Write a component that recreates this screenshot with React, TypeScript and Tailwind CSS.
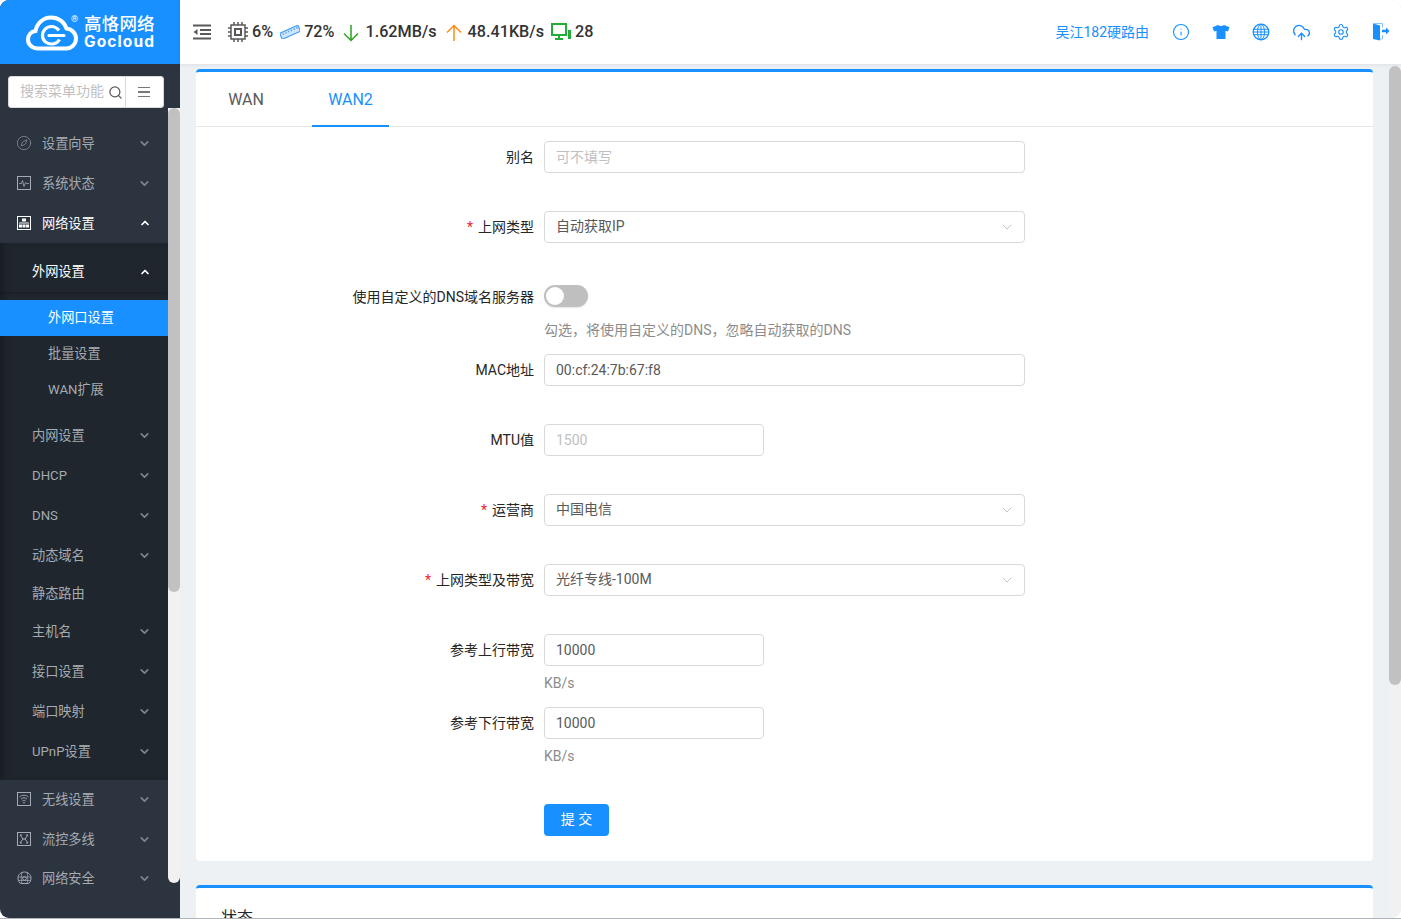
import React from 'react';
import { ChevronDown, ChevronUp, CloudUpload, Compass, Info, Search, Settings } from 'lucide-react';

const fontStack = "font-[Roboto,'Noto_Sans_CJK_SC',sans-serif]";

function Logo() {
  return (
    <div className="relative flex h-16 items-center bg-[#1890ff] pl-[26px]">
      <svg width="52" height="36" viewBox="0 0 52 36" fill="none" className="mt-[1px]">
        <path
          d="M12 33.500C5.500 33.500 2 29 2 24.500C2 20 5 16.500 9.500 16C11 8 17.500 2.500 25 2.500C32.500 2.500 38.500 7 40.500 13.500C46 14 50 18.500 50 23.500C50 29 45.500 33.500 40 33.500Z"
          stroke="#fff"
          strokeWidth="4"
        />
        <path d="M33 15.500C31 13 28.500 11.500 25.500 11.500C20.500 11.500 16.500 15.500 16.500 20.500C16.500 25.500 20.500 29 25.500 29C29 29 32 27 33.500 24.500" stroke="#fff" strokeWidth="3.200" />
        <path d="M23 20.500H38" stroke="#fff" strokeWidth="3.200" strokeLinecap="round" />
      </svg>
      <span className="absolute left-[71px] top-[15px] text-[9px] leading-none text-white">®</span>
      <div className="ml-[6px] flex flex-col text-white">
        <span className="text-[17.500px] leading-[19px] font-medium tracking-[0.200px]">高恪网络</span>
        <span className="font-[Inter,sans-serif] text-[15.500px] leading-[15px] font-bold tracking-[1.100px]">Gocloud</span>
      </div>
    </div>
  );
}

function BoxIcon({ children }: { children: React.ReactNode }) {
  return (
    <svg width="14" height="14" viewBox="0 0 14 14" fill="none" stroke="currentColor" className="shrink-0">
      <rect x="0.500" y="0.500" width="13" height="13" />
      {children}
    </svg>
  );
}

function TopItem({
  label,
  icon,
  open,
  className = '',
}: {
  label: string;
  icon: React.ReactNode;
  open?: boolean;
  className?: string;
}) {
  return (
    <div className={`flex h-10 items-center pl-[17px] pr-[17px] ${open ? 'text-white' : 'text-[#a4abb2]'} ${className}`}>
      <span className="flex w-[25px] shrink-0">{icon}</span>
      <span className="flex-1 pt-[2px] text-[13.200px]">{label}</span>
      {open ? <ChevronUp size={12} strokeWidth={3.500} /> : <ChevronDown size={13} strokeWidth={3} className="text-[#7f868d]" />}
    </div>
  );
}

function SubItem({ label, arrow = true, h = 'h-10' }: { label: string; arrow?: boolean; h?: string }) {
  return (
    <div className={`flex ${h} items-center pl-8 pr-[17px] text-[#a4abb2]`}>
      <span className="flex-1 pt-[2px] text-[13.200px]">{label}</span>
      {arrow && <ChevronDown size={13} strokeWidth={3} className="text-[#7f868d]" />}
    </div>
  );
}

function Sidebar() {
  return (
    <aside className="flex w-[180px] shrink-0 flex-col bg-[#2c3440]">
      <Logo />
      <div className="flex min-h-0 flex-1">
        <div className="w-[168px] shrink-0 overflow-hidden">
          <div className="mb-[15px] ml-2 mr-1 mt-3 flex h-8 items-center rounded-[3px] border border-[#d9d9d9] bg-white">
            <span className="w-[99px] shrink-0 overflow-hidden whitespace-nowrap pb-[2px] pl-[11px] text-sm leading-none text-[#bfbfbf]">搜索菜单功能</span>
            <Search size={15} className="shrink-0 text-[#595959]" />
            <span className="ml-[2px] h-full w-px bg-[#d9d9d9]" />
            <span className="ml-3 flex w-3 flex-col gap-[3px]">
              <i className="h-[1.500px] bg-[#777]" />
              <i className="h-[1.500px] bg-[#777]" />
              <i className="h-[1.500px] bg-[#777]" />
            </span>
          </div>
          <TopItem label="设置向导" icon={<Compass size={16} strokeWidth={1.100} className="-ml-px text-[#8f969d]" />} />
          <TopItem
            label="系统状态"
            icon={
              <BoxIcon>
                <path d="M2 7.500h2.500l1-3 1.500 6 1.500-4 1 1H12" strokeWidth="0.800" />
              </BoxIcon>
            }
          />
          <TopItem
            label="网络设置"
            open
            icon={
              <svg width="14" height="14" viewBox="0 0 14 14" className="shrink-0">
                <rect width="14" height="14" fill="#fff" />
                <rect x="1" y="1" width="12" height="12" fill="#2c3440" />
                <rect x="5" y="2.500" width="4" height="3" fill="#fff" />
                <rect x="2" y="6.500" width="10" height="1" fill="#fff" />
                <rect x="2" y="8.500" width="3" height="3" fill="#fff" />
                <rect x="5.500" y="8.500" width="3" height="3" fill="#fff" />
                <rect x="9" y="8.500" width="3" height="3" fill="#fff" />
              </svg>
            }
          />
          <div className="h-[537px] bg-[#1f262d] shadow-[inset_8px_0_10px_-6px_rgba(0,0,0,0.300)]">
            <div className="flex h-[49px] items-center pl-8 pr-[17px] text-white shadow-[0_1px_3px_rgba(0,0,0,0.250)]">
              <span className="flex-1 pt-[8px] text-[13.200px]">外网设置</span>
              <ChevronUp size={12} strokeWidth={3.500} className="mt-[8px]" />
            </div>
            <div className="pb-[7px] pt-2">
              <div className="flex h-9 items-center bg-[#1890ff] pl-12 text-[13.200px] text-white">外网口设置</div>
              <div className="flex h-9 items-center pl-12 text-[13.200px] text-[#a4abb2]">批量设置</div>
              <div className="flex h-9 items-center pl-12 text-[13.200px] text-[#a4abb2]">WAN扩展</div>
            </div>
            <SubItem label="内网设置" />
            <SubItem label="DHCP" />
            <SubItem label="DNS" />
            <SubItem label="动态域名" />
            <SubItem label="静态路由" arrow={false} h="h-9" />
            <SubItem label="主机名" />
            <SubItem label="接口设置" />
            <SubItem label="端口映射" />
            <SubItem label="UPnP设置" />
          </div>
          <TopItem
            label="无线设置"
            className="-mt-px"
            icon={
              <BoxIcon>
                <path d="M2.500 5c2.800-2.300 6.200-2.300 9 0M4 7c2-1.500 4-1.500 6 0M5.500 9c1-.8 2-.8 3 0" strokeWidth="0.900" />
                <circle cx="7" cy="10.800" r="0.800" fill="currentColor" stroke="none" />
              </BoxIcon>
            }
          />
          <TopItem
            label="流控多线"
            icon={
              <BoxIcon>
                <path d="M3 3l3 4-3 4M11 3L8 7l3 4M3 3h2M9 3h2M3 11h2M9 11h2M5.500 7h3" strokeWidth="1" />
              </BoxIcon>
            }
          />
          <TopItem
            label="网络安全"
            className="-mt-px"
            icon={
              <svg width="15" height="14" viewBox="0 0 15 14" fill="none" stroke="currentColor" strokeWidth="1" className="shrink-0">
                <path d="M1 7c0-3.500 3-6 6.500-6S14 3.500 14 7c0 3-1.500 5.500-3 5.500H4C2.500 12.500 1 10 1 7z" />
                <path d="M5 1.500C4 4 4 10 5 12.500M10 1.500c1 2.500 1 8.500 0 11M1 6h13M1.500 9.500h12" strokeWidth="0.700" />
                <circle cx="7.500" cy="7.500" r="1.800" />
              </svg>
            }
          />
        </div>
        <div className="mt-11 flex h-[775px] w-3 flex-col overflow-hidden rounded-b-md bg-[#f1f1f1]">
          <div className="h-[484px] rounded-md bg-[#c1c1c1]" />
        </div>
      </div>
    </aside>
  );
}

function Stat({ children, className = '' }: { children: React.ReactNode; className?: string }) {
  return <span className={`text-[16.200px] font-medium text-[#333] ${className}`}>{children}</span>;
}

function CpuIcon() {
  return (
    <svg width="20" height="20" viewBox="0 0 20 20" fill="none" stroke="#595959" className="ml-[17px]">
      <rect x="3" y="3" width="14" height="14" strokeWidth="1.500" />
      <rect x="7" y="7" width="6" height="6" strokeWidth="2" />
      <path d="M6 0v3M10 0v3M14 0v3M6 17v3M10 17v3M14 17v3M0 6h3M0 10h3M0 14h3M17 6h3M17 10h3M17 14h3" strokeWidth="1.500" />
    </svg>
  );
}

function MemoryIcon() {
  return (
    <svg width="20" height="14" viewBox="0 0 20 14" className="ml-[7px]">
      <g transform="rotate(-24 10 7)">
        <rect x="0" y="4" width="20" height="6.500" rx="0.800" fill="#cfe6fd" stroke="#3f9bf6" strokeWidth="1.200" />
        <path d="M3 5v2M6 5v2M9 5v2M12 5v2M15 5v2M18 5v2" stroke="#3f9bf6" strokeWidth="1" />
      </g>
    </svg>
  );
}

function ArrowDownIcon() {
  return (
    <svg width="16" height="18" viewBox="0 0 16 18" fill="none" stroke="#2ea121" strokeWidth="1.500" className="ml-[9px] mt-[1px]">
      <path d="M8 1v15.500M1 9.500l7 7 7-7" />
    </svg>
  );
}

function ArrowUpIcon() {
  return (
    <svg width="16" height="18" viewBox="0 0 16 18" fill="none" stroke="#fa8c16" strokeWidth="1.500" className="ml-[9px] mt-[1px]">
      <path d="M8 17V1.500M1 8.500l7-7 7 7" />
    </svg>
  );
}

function MonitorIcon() {
  return (
    <svg width="20" height="18" viewBox="0 0 20 18" fill="none" className="ml-[7px]">
      <rect x="1" y="1" width="14" height="11" stroke="#22ac38" strokeWidth="2" />
      <path d="M8 12v3M4 16h8" stroke="#22ac38" strokeWidth="2" />
      <rect x="17" y="7" width="3" height="9" fill="#22ac38" />
    </svg>
  );
}

function GlobeIcon() {
  return (
    <svg width="18" height="18" viewBox="0 0 18 18" fill="none" stroke="#1890ff">
      <circle cx="9" cy="9" r="7.800" strokeWidth="1.300" />
      <ellipse cx="9" cy="9" rx="3.500" ry="7.800" strokeWidth="1" />
      <path d="M9 1v16M1.500 6.300h15M1.500 11.700h15M1 9h16" strokeWidth="1" />
    </svg>
  );
}

function ShirtIcon() {
  return (
    <svg width="18" height="16" viewBox="0 0 18 16" fill="#1890ff">
      <path d="M6 1c1.500 1.200 4.500 1.200 6 0l5.500 2.200L16 7.500l-2.500-.7V15h-9V6.800L2 7.500.5 3.200z" />
    </svg>
  );
}

function ExitIcon() {
  return (
    <svg width="18" height="18" viewBox="0 0 18 18">
      <path d="M1 0.500l7 2v15l-7-1.500z" fill="#1890ff" />
      <path d="M1 .5h9.500v4M10.500 12v4H8" fill="none" stroke="#8ac4fb" strokeWidth="1" />
      <path d="M10 6.800h4V4.500l3.500 3.500-3.500 3.500V9.200h-4z" fill="#1890ff" />
    </svg>
  );
}

function Header() {
  return (
    <header className="relative z-10 flex h-16 shrink-0 items-center bg-white pl-[13px] shadow-[0_1px_4px_rgba(0,21,41,0.080)]">
      <svg width="18" height="16" viewBox="0 0 18 16" fill="none" stroke="#595959" strokeWidth="2">
        <path d="M0 1.500h18M7 6h11M7 10h11M0 14.500h18" />
        <path d="M4.500 5v6L0.500 8z" fill="#595959" stroke="none" />
      </svg>
      <CpuIcon />
      <Stat className="ml-1">6%</Stat>
      <MemoryIcon />
      <Stat className="ml-1">72%</Stat>
      <ArrowDownIcon />
      <Stat className="ml-[6px]">1.62MB/s</Stat>
      <ArrowUpIcon />
      <Stat className="ml-[6px]">48.41KB/s</Stat>
      <MonitorIcon />
      <Stat className="ml-1">28</Stat>
      <span className="ml-auto mr-3 text-sm text-[#1890ff]">吴江182硬路由</span>
      <div className="flex items-center text-[#1890ff]">
        <span className="flex w-10 justify-center"><Info size={18} strokeWidth={1.500} /></span>
        <span className="flex w-10 justify-center"><ShirtIcon /></span>
        <span className="flex w-10 justify-center"><GlobeIcon /></span>
        <span className="flex w-10 justify-center"><CloudUpload size={19} strokeWidth={1.700} /></span>
        <span className="flex w-10 justify-center"><Settings size={18} strokeWidth={1.500} /></span>
        <span className="flex w-10 justify-center"><ExitIcon /></span>
      </div>
    </header>
  );
}

function Row({
  label,
  required,
  className = '',
  labelClass = '',
  children,
}: {
  label: string;
  required?: boolean;
  className?: string;
  labelClass?: string;
  children: React.ReactNode;
}) {
  return (
    <div className={`flex items-center ${className}`}>
      <label className={`w-[339px] shrink-0 pr-px text-right text-sm text-[#262626] ${labelClass}`}>
        {required && <span className="mr-[5px] text-[#f5222d]">*</span>}
        {label}
      </label>
      <div className="ml-[9px] flex items-center">{children}</div>
    </div>
  );
}

function TextInput({ value, placeholder, short }: { value?: string; placeholder?: string; short?: boolean }) {
  return (
    <input
      readOnly
      value={value ?? ''}
      placeholder={placeholder}
      className={`h-8 ${short ? 'w-[220px]' : 'w-[481px]'} rounded border border-[#d9d9d9] bg-white px-[11px] text-sm text-[#595959] outline-none placeholder:text-[#bfbfbf]`}
    />
  );
}

function SelectBox({ value }: { value: string }) {
  return (
    <div className="flex h-8 w-[481px] items-center justify-between rounded border border-[#d9d9d9] bg-white pl-[11px] pr-[9px] text-sm text-[#595959]">
      <span className="pb-[2px]">{value}</span>
      <ChevronDown size={16} strokeWidth={1} className="text-[#a6a6a6]" />
    </div>
  );
}

function Hint({ children, className = '' }: { children: React.ReactNode; className?: string }) {
  return <div className={`ml-[348px] h-[22px] text-sm leading-[22px] text-[#8c8c8c] ${className}`}>{children}</div>;
}

function WanForm() {
  return (
    <section className="rounded border-t-[3px] border-[#1890ff] bg-white">
      <div className="flex h-[55px] gap-8 border-b border-[#e8e8e8] pl-4 text-base">
        <div className="flex h-[55px] w-[68px] items-center justify-center text-[#595959]">WAN</div>
        <div className="flex h-[55px] w-[77px] items-center justify-center border-b-2 border-[#1890ff] pt-[2px] text-[#1890ff]">WAN2</div>
      </div>
      <form className="pb-[25px] pt-[14px]">
        <Row label="别名" className="mb-[38px]">
          <TextInput placeholder="可不填写" />
        </Row>
        <Row label="上网类型" required className="mb-[37px]">
          <SelectBox value="自动获取IP" />
        </Row>
        <Row label="使用自定义的DNS域名服务器" className="h-8" labelClass="pt-[2px]">
          <span className="flex h-[22px] w-11 items-center rounded-full bg-[#bfbfbf] pl-[2px] shadow-[0_1px_2px_rgba(0,0,0,0.100)]">
            <i className="h-[18px] w-[18px] rounded-full bg-white" />
          </span>
        </Row>
        <Hint className="mb-[13px] mt-[7px]">勾选，将使用自定义的DNS，忽略自动获取的DNS</Hint>
        <Row label="MAC地址" className="mb-[38px]">
          <TextInput value="00:cf:24:7b:67:f8" />
        </Row>
        <Row label="MTU值" className="mb-[38px]">
          <TextInput short placeholder="1500" />
        </Row>
        <Row label="运营商" required className="mb-[38px]">
          <SelectBox value="中国电信" />
        </Row>
        <Row label="上网类型及带宽" required className="mb-[38px]">
          <SelectBox value="光纤专线-100M" />
        </Row>
        <Row label="参考上行带宽">
          <TextInput short value="10000" />
        </Row>
        <Hint className="mb-[13px] mt-[6px]">KB/s</Hint>
        <Row label="参考下行带宽">
          <TextInput short value="10000" />
        </Row>
        <Hint className="mb-[37px] mt-[6px]">KB/s</Hint>
        <button type="button" className="ml-[348px] h-8 w-[65px] rounded bg-[#1890ff] pb-[3px] text-sm text-white">
          提 交
        </button>
      </form>
    </section>
  );
}

export default function App() {
  return (
    <div className={`h-[919px] w-full overflow-hidden border-b border-[#aeb4ba] bg-white ${fontStack}`}>
      <div className="flex h-[918px] overflow-hidden rounded-[9px] bg-[#eef1f4]">
        <Sidebar />
        <div className="flex min-w-0 flex-1 flex-col">
          <Header />
          <div className="flex min-h-0 flex-1">
            <main className="min-w-0 flex-1 overflow-hidden px-4 pt-[5px]">
              <WanForm />
              <section className="mt-6 rounded border-t-[3px] border-[#1890ff] bg-white pl-[25px] pt-[18px] text-base text-[#262626]">
                状态
              </section>
            </main>
            <div className="mt-[2px] w-3 shrink-0 bg-[#f1f1f1]">
              <div className="h-[619px] rounded-md bg-[#c1c1c1]" />
            </div>
          </div>
        </div>
      </div>
    </div>
  );
}
